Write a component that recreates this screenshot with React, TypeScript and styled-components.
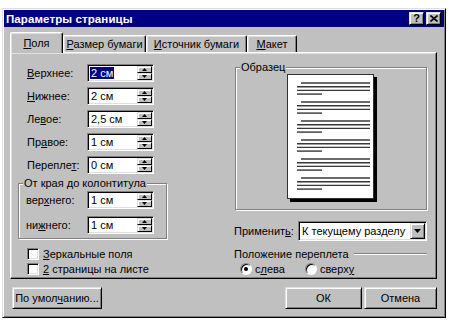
import React from "react";
import styled, { createGlobalStyle, css } from "styled-components";

const Global = createGlobalStyle`
  html, body { margin: 0; padding: 0; background: #fff; }
  body {
    font-family: "Liberation Sans", Arial, sans-serif;
    font-size: 11px;
    color: #000;
  }
  * { box-sizing: border-box; }
`;

const raised = css`
  border: 1px solid;
  border-color: #dfdfdf #000 #000 #dfdfdf;
  box-shadow: inset 1px 1px 0 #fff, inset -1px -1px 0 #808080;
`;

const sunken = css`
  border: 1px solid;
  border-color: #808080 #fff #fff #808080;
  box-shadow: inset 1px 1px 0 #000, inset -1px -1px 0 #dfdfdf;
`;

const Stage = styled.div`
  padding: 8px 0 0 2px;
`;

const Dialog = styled.div`
  width: 444px;
  height: 310px;
  background: #c0c0c0;
  ${raised}
  padding: 1px;
  display: flex;
  flex-direction: column;
`;

const TitleBar = styled.div`
  height: 17px;
  background: #000080;
  color: #fff;
  display: flex;
  align-items: center;
  padding: 0 3px 0 2px;
  font-weight: bold;
  font-size: 11.5px;
`;

const TitleText = styled.span`
  flex: 1;
  letter-spacing: 0.1px;
`;

const TitleButton = styled.div<{ $gap?: number }>`
  width: 15px;
  height: 13px;
  background: #c0c0c0;
  ${raised}
  margin-left: ${(p) => p.$gap ?? 0}px;
  display: flex;
  align-items: center;
  justify-content: center;
  color: #000;
  font-weight: bold;
  font-size: 11px;
  line-height: 1;
`;

const Body = styled.div`
  padding: 5px 7px 0 6px;
  display: flex;
  flex-direction: column;
`;

const TabRow = styled.div`
  display: flex;
  align-items: flex-end;
  height: 20px;
`;

const Tab = styled.div<{ $w: number; $active?: boolean }>`
  width: ${(p) => p.$w}px;
  height: ${(p) => (p.$active ? 21 : 17)}px;
  margin-bottom: ${(p) => (p.$active ? -1 : 0)}px;
  position: relative;
  z-index: ${(p) => (p.$active ? 2 : 0)};
  background: #c0c0c0;
  border-top: 1px solid #fff;
  border-left: 1px solid #fff;
  border-right: 1px solid #000;
  border-radius: 2px 2px 0 0;
  box-shadow: inset -1px 0 0 #808080, inset 1px 1px 0 #dfdfdf;
  display: flex;
  align-items: center;
  justify-content: center;
`;

const Panel = styled.div`
  height: 227px;
  background: #c0c0c0;
  border: 1px solid;
  border-color: #fff #000 #000 #fff;
  box-shadow: inset -1px -1px 0 #808080, inset 1px 1px 0 #dfdfdf;
  display: grid;
  grid-template-columns: 223px 193px;
  padding-top: 11px;
`;

const Column = styled.div`
  display: flex;
  flex-direction: column;
`;

const FieldRow = styled.div<{ $indent: number; $labelW: number; $gap: number; $mt?: number }>`
  display: flex;
  align-items: center;
  height: 18px;
  padding-left: ${(p) => p.$indent}px;
  margin-top: ${(p) => p.$mt ?? 0}px;
  margin-bottom: ${(p) => p.$gap}px;
  & > span:first-child {
    width: ${(p) => p.$labelW}px;
  }
`;

const Label = styled.span`
  white-space: nowrap;
`;

const U = styled.u`
  text-decoration: underline;
  text-underline-offset: 1px;
`;

const Field = styled.div<{ $w: number; $h: number }>`
  width: ${(p) => p.$w}px;
  height: ${(p) => p.$h}px;
  background: #fff;
  ${sunken}
  display: flex;
  align-items: center;
  padding: 2px 2px 2px 3px;
`;

const FieldText = styled.span`
  flex: 1;
  white-space: nowrap;
`;

const Selected = styled.span`
  background: #000080;
  color: #fff;
  padding: 0 1px;
  margin-left: -1px;
`;

const SpinStack = styled.div`
  display: flex;
  flex-direction: column;
  width: 15px;
  height: 14px;
  margin-right: -1px;
`;

const SpinButton = styled.div`
  flex: 1;
  background: #c0c0c0;
  border: 1px solid;
  border-color: #dfdfdf #000 #000 #dfdfdf;
  box-shadow: inset 1px 1px 0 #fff;
  display: flex;
  align-items: center;
  justify-content: center;
`;

const DropButton = styled.div`
  width: 15px;
  height: 16px;
  margin-right: -1px;
  background: #c0c0c0;
  ${raised}
  display: flex;
  align-items: center;
  justify-content: center;
`;

const Group = styled.div<{ $ml: number; $mt: number; $w: number; $h: number }>`
  margin-left: ${(p) => p.$ml}px;
  margin-top: ${(p) => p.$mt}px;
  width: ${(p) => p.$w}px;
  height: ${(p) => p.$h}px;
  border: 1px solid #808080;
  box-shadow: inset 1px 1px 0 #fff, 1px 1px 0 #fff;
  display: flex;
  flex-direction: column;
`;

const Legend = styled.span`
  align-self: flex-start;
  margin: -7px 0 0 4px;
  padding: 0 1px;
  background: #c0c0c0;
  line-height: 13px;
  height: 13px;
`;

const CheckList = styled.div`
  margin-top: 7px;
  display: flex;
  flex-direction: column;
`;

const CheckRow = styled.div`
  display: flex;
  align-items: center;
  height: 15px;
  padding-left: 16px;
  gap: 4px;
`;

const CheckBox = styled.div`
  width: 12px;
  height: 12px;
  background: #fff;
  ${sunken}
`;

const Page = styled.div`
  align-self: center;
  margin: 0 0 0 -2px;
  width: 87px;
  height: 125px;
  background: #fff;
  border: 1px solid #303030;
  box-shadow: 3px 3px 0 #000;
`;

const ApplyRow = styled.div`
  display: flex;
  align-items: center;
  height: 20px;
  margin-top: 11px;
  & > span:first-child {
    width: 64px;
  }
`;

const SectionHead = styled.div`
  display: flex;
  align-items: center;
  height: 13px;
  margin-top: 6px;
`;

const Etched = styled.div`
  flex: 1;
  height: 2px;
  margin-left: 5px;
  border-top: 1px solid #808080;
  border-bottom: 1px solid #fff;
`;

const RadioRow = styled.div`
  display: flex;
  align-items: center;
  height: 14px;
  margin-top: 2px;
  padding-left: 6px;
`;

const RadioItem = styled.div<{ $ml?: number }>`
  display: flex;
  align-items: center;
  gap: 3px;
  margin-left: ${(p) => p.$ml ?? 0}px;
`;

const RadioCircle = styled.div<{ $on?: boolean }>`
  width: 12px;
  height: 12px;
  border-radius: 50%;
  background: #fff;
  border: 1px solid;
  border-color: #808080 #fff #fff #808080;
  box-shadow: inset 1px 1px 0 #000;
  display: flex;
  align-items: center;
  justify-content: center;
  &::after {
    content: "";
    width: 4px;
    height: 4px;
    border-radius: 50%;
    background: ${(p) => (p.$on ? "#000" : "transparent")};
  }
`;

const Footer = styled.div`
  display: flex;
  margin-top: 8px;
  padding-left: 2px;
`;

const Button = styled.div<{ $w: number; $ml?: number }>`
  width: ${(p) => p.$w}px;
  height: 22px;
  margin-left: ${(p) => p.$ml ?? 0}px;
  background: #c0c0c0;
  ${raised}
  display: flex;
  align-items: center;
  justify-content: center;
`;

const Spacer = styled.div`
  flex: 1;
`;

const UpArrow = () => (
  <svg width="5" height="3" viewBox="0 0 5 3">
    <polygon points="2.5,0 5,3 0,3" fill="#000" />
  </svg>
);
const DownArrow = ({ w = 5, h = 3 }: { w?: number; h?: number }) => (
  <svg width={w} height={h} viewBox={`0 0 ${w} ${h}`}>
    <polygon points={`0,0 ${w},0 ${w / 2},${h}`} fill="#000" />
  </svg>
);

const Spin: React.FC<{ children: React.ReactNode }> = ({ children }) => (
  <Field $w={67} $h={18}>
    <FieldText>{children}</FieldText>
    <SpinStack>
      <SpinButton>
        <UpArrow />
      </SpinButton>
      <SpinButton>
        <DownArrow />
      </SpinButton>
    </SpinStack>
  </Field>
);

const PageLines = () => {
  const groups = [0, 1, 2, 3, 4, 5];
  return (
    <svg width="85" height="123" viewBox="0 0 85 123">
      {groups.map((g) => {
        const y = 8 + g * 19;
        return (
          <g key={g} stroke="#383838" strokeWidth="1.4">
            <line x1="13" y1={y} x2="82" y2={y} />
            <line x1="9" y1={y + 3.7} x2="82" y2={y + 3.7} />
            <line x1="9" y1={y + 7.4} x2="82" y2={y + 7.4} />
            <line x1="9" y1={y + 11.1} x2="34" y2={y + 11.1} />
          </g>
        );
      })}
    </svg>
  );
};

export default function App() {
  return (
    <>
      <Global />
      <Stage>
        <Dialog>
          <TitleBar>
            <TitleText>Параметры страницы</TitleText>
            <TitleButton>?</TitleButton>
            <TitleButton $gap={2}>
              <svg width="8" height="7" viewBox="0 0 8 7">
                <path d="M0.5 0.5 L7.5 6.5 M7.5 0.5 L0.5 6.5" stroke="#000" strokeWidth="1.6" />
              </svg>
            </TitleButton>
          </TitleBar>
          <Body>
            <TabRow>
              <Tab $w={53} $active>
                <span>
                  <U>П</U>оля
                </span>
              </Tab>
              <Tab $w={83}>
                <span>
                  <U>Р</U>азмер бумаги
                </span>
              </Tab>
              <Tab $w={101}>
                <span>
                  <U>И</U>сточник бумаги
                </span>
              </Tab>
              <Tab $w={50}>
                <span>
                  <U>М</U>акет
                </span>
              </Tab>
            </TabRow>
            <Panel>
              <Column>
                <FieldRow $indent={16} $labelW={60} $gap={5}>
                  <Label>
                    <U>В</U>ерхнее:
                  </Label>
                  <Spin>
                    <Selected>2 см</Selected>
                  </Spin>
                </FieldRow>
                <FieldRow $indent={16} $labelW={60} $gap={5}>
                  <Label>
                    <U>Н</U>ижнее:
                  </Label>
                  <Spin>2 см</Spin>
                </FieldRow>
                <FieldRow $indent={16} $labelW={60} $gap={5}>
                  <Label>
                    Ле<U>в</U>ое:
                  </Label>
                  <Spin>2,5 см</Spin>
                </FieldRow>
                <FieldRow $indent={16} $labelW={60} $gap={5}>
                  <Label>
                    Пр<U>а</U>вое:
                  </Label>
                  <Spin>1 см</Spin>
                </FieldRow>
                <FieldRow $indent={16} $labelW={60} $gap={5}>
                  <Label>
                    Перепле<U>т</U>:
                  </Label>
                  <Spin>0 см</Spin>
                </FieldRow>
                <Group $ml={7} $mt={4} $w={149} $h={56}>
                  <Legend>От края до колонтитула</Legend>
                  <FieldRow $indent={7} $labelW={61} $gap={7} $mt={1}>
                    <Label>
                      вер<U>х</U>него:
                    </Label>
                    <Spin>1 см</Spin>
                  </FieldRow>
                  <FieldRow $indent={7} $labelW={61} $gap={0}>
                    <Label>
                      ни<U>ж</U>него:
                    </Label>
                    <Spin>1 см</Spin>
                  </FieldRow>
                </Group>
                <CheckList>
                  <CheckRow>
                    <CheckBox />
                    <Label>
                      <U>З</U>еркальные поля
                    </Label>
                  </CheckRow>
                  <CheckRow>
                    <CheckBox />
                    <Label>
                      <U>2</U> страницы на листе
                    </Label>
                  </CheckRow>
                </CheckList>
              </Column>
              <Column>
                <Group $ml={1} $mt={3} $w={192} $h={143}>
                  <Legend>Образец</Legend>
                  <Page>
                    <PageLines />
                  </Page>
                </Group>
                <ApplyRow>
                  <Label>
                    Применит<U>ь</U>:
                  </Label>
                  <Field $w={129} $h={20}>
                    <FieldText>К текущему разделу</FieldText>
                    <DropButton>
                      <DownArrow w={7} h={4} />
                    </DropButton>
                  </Field>
                </ApplyRow>
                <SectionHead>
                  <Label>Положение переплета</Label>
                  <Etched />
                </SectionHead>
                <RadioRow>
                  <RadioItem>
                    <RadioCircle $on />
                    <Label>
                      с<U>л</U>ева
                    </Label>
                  </RadioItem>
                  <RadioItem $ml={20}>
                    <RadioCircle />
                    <Label>
                      сверх<U>у</U>
                    </Label>
                  </RadioItem>
                </RadioRow>
              </Column>
            </Panel>
            <Footer>
              <Button $w={90}>
                <span>
                  По умол<U>ч</U>анию...
                </span>
              </Button>
              <Spacer />
              <Button $w={77}>ОК</Button>
              <Button $w={73} $ml={2}>
                Отмена
              </Button>
            </Footer>
          </Body>
        </Dialog>
      </Stage>
    </>
  );
}
